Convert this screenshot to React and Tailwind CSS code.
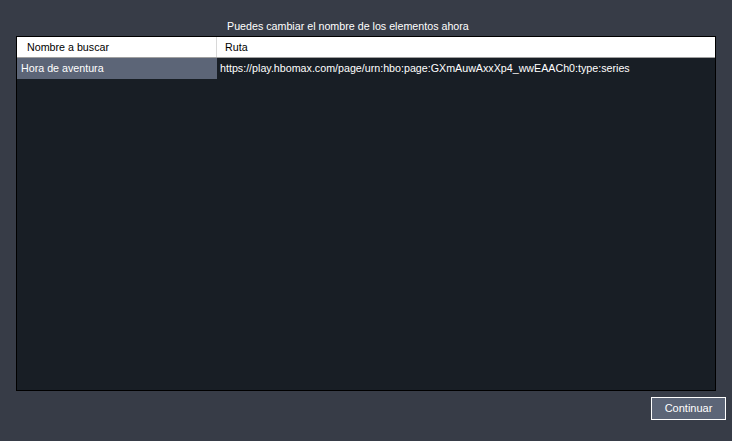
export default function App() {
  return (
    <div
      className="w-[732px] h-[441px] bg-[#373c47] text-white text-[10.7px] flex flex-col"
      style={{ fontFamily: '"Liberation Sans", Arial, sans-serif' }}
    >
      <div className="h-[36px] flex items-end pb-[4px] pl-[227px] leading-none">
        Puedes cambiar el nombre de los elementos ahora
      </div>

      {/* grid */}
      <div className="mx-[16px] w-[700px] h-[355px] border border-black bg-[#181e25] flex flex-col">
        <div className="h-[21px] bg-white text-black flex border-b border-[#a0a0a0]">
          <div className="w-[200px] pl-[10px] flex items-center border-r border-[#d8d8d8]">
            Nombre a buscar
          </div>
          <div className="flex-1 pl-[8px] flex items-center">Ruta</div>
        </div>
        <div className="h-[21px] flex">
          <div className="w-[200px] bg-[#5c6577] pl-[4px] flex items-center">
            Hora de aventura
          </div>
          <div className="flex-1 pl-[3px] flex items-center">
            https://play.hbomax.com/page/urn:hbo:page:GXmAuwAxxXp4_wwEAACh0:type:series
          </div>
        </div>
      </div>

      <div className="flex justify-end pr-[6px] pt-[6px]">
        <button className="w-[75px] h-[23px] border border-white bg-[#5c6577] text-white text-[11px] leading-none">
          Continuar
        </button>
      </div>
    </div>
  );
}
